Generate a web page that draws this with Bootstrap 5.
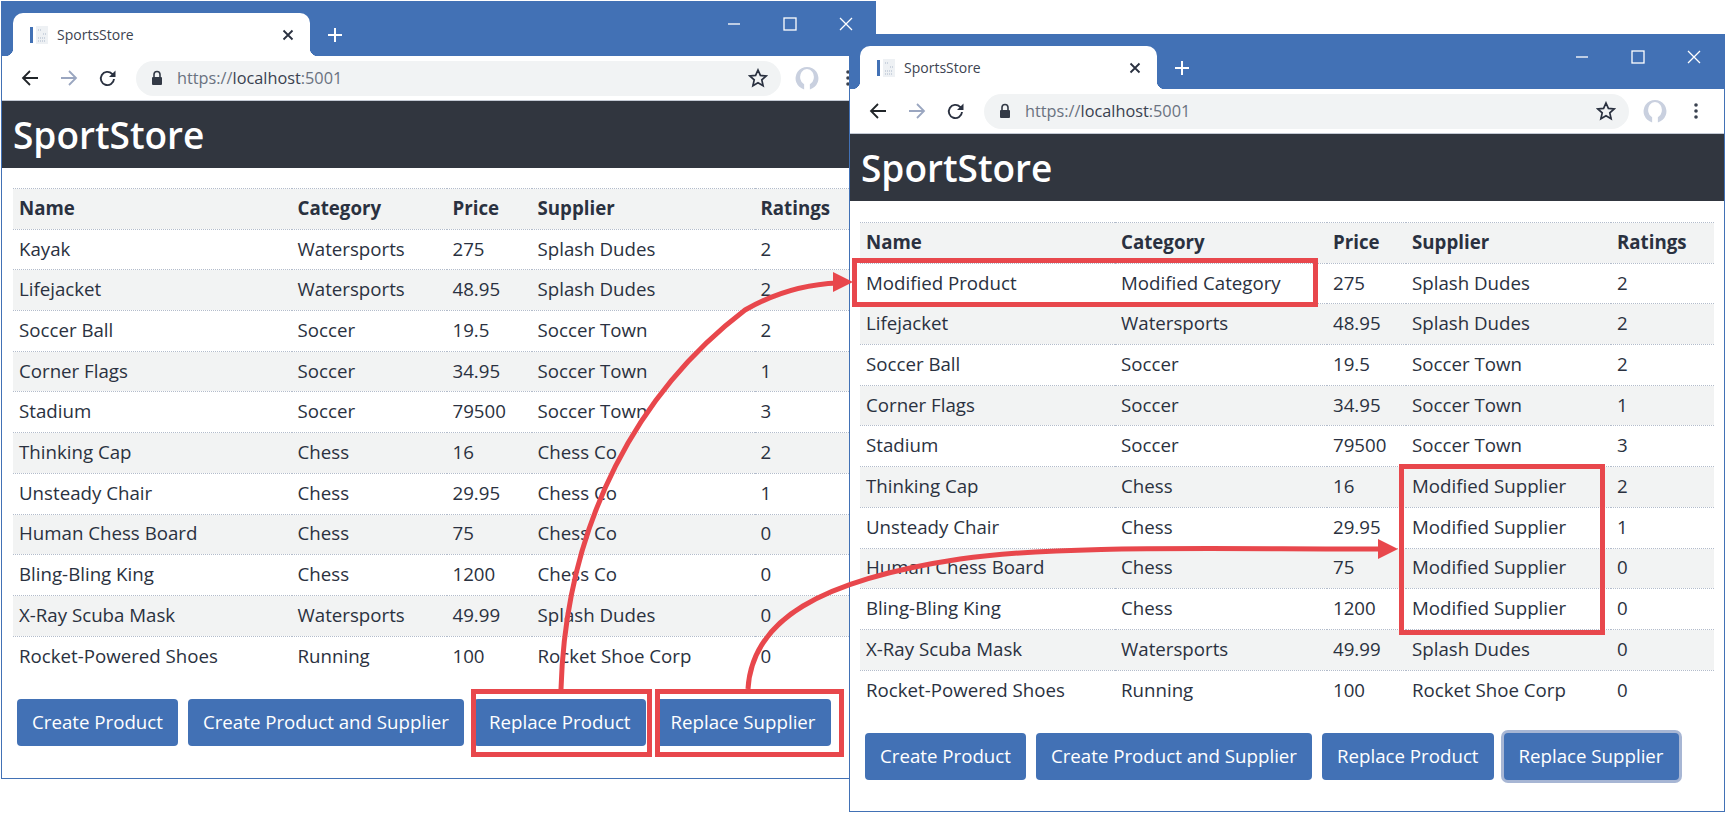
<!DOCTYPE html>
<html lang="en">
<head>
    <meta charset="UTF-8">
    <title>SportsStore</title>
    <link href="https://cdn.jsdelivr.net/npm/bootstrap@5.3.0/dist/css/bootstrap.min.css" rel="stylesheet">
    <style>
        body { background: #fff; overflow: hidden; font-family: "Open Sans", "Liberation Sans", sans-serif; color: #2a3140; }
        .desk { position: relative; width: 1725px; height: 814px; }
        .win { position: absolute; width: 875px; background: #fff; border: 1px solid #4271b5; }
        #winA { left: 1px; top: 1px; height: 778px; }
        #winB { left: 849px; top: 34px; width: 876px; height: 778px; }

        .titlebar { height: 54px; background: #4271b5; padding: 11px 0 0 11px; }
        #winB .titlebar { padding-left: 10px; }
        .tab-page { position: relative; width: 297px; height: 43px; background: #fff; border-radius: 10px 10px 0 0; padding: 0 16px; color: #3c4350; font-size: 14px; }
        .tab-page::before, .tab-page::after { content: ""; position: absolute; bottom: 0; width: 8px; height: 8px; }
        .tab-page::before { left: -8px; background: radial-gradient(circle at 0 0, #4271b5 8px, #fff 8.5px); }
        .tab-page::after { right: -8px; background: radial-gradient(circle at 100% 0, #4271b5 8px, #fff 8.5px); }
        .tab-title { margin-left: 8px; flex-grow: 1; }
        .plus-btn { margin-left: 17px; }
        .win-ctrls { margin-left: auto; gap: 42px; padding: 0 22px 22px 0; }
        #winB .win-ctrls { padding-right: 23px; }

        .toolbar { height: 45px; padding: 0 16px 0 18px; border-bottom: 1px solid #c3c9d4; }
        .nav-icons { gap: 19px; }
        .omnibox { height: 35px; width: 645px; margin-left: 18px; background: #f1f3f4; border-radius: 18px; padding: 0 13px 0 15px; font-size: 16.3px; color: #6a7280; }
        .omnibox b { font-weight: 400; color: #39414f; }
        .url-text { margin-left: 14px; flex-grow: 1; }
        .avatar { margin-left: 14px; }
        .more { margin-left: 27px; }

        .site-head { height: 67px; background: #31363f; color: #fff; padding: 1px 11px 0; font-size: 37px; font-weight: 600; line-height: 66px; }

        .store-table { table-layout: fixed; width: 854px; margin: 20px 0 0 11px; font-size: 18.7px; --bs-table-striped-bg: #f2f3f3; --bs-table-color: #2a3140; --bs-table-striped-color: #2a3140; }
        #winB .store-table { margin: 21px 0 0 10px; }
        .store-table td, .store-table th { height: 40.7px; padding: 0 6px 2px; vertical-align: middle; border-bottom: 0; border-top: 1px dotted #b3bccb; white-space: nowrap; }
        .store-table th { font-weight: 700; }

        #winA .c1 { width: 278.5px; } #winA .c2 { width: 155px; } #winA .c3 { width: 85px; } #winA .c4 { width: 223px; } #winA .c5 { width: 112.5px; }
        #winB .c1 { width: 255px; } #winB .c2 { width: 212px; } #winB .c3 { width: 79px; } #winB .c4 { width: 205px; } #winB .c5 { width: 103px; }

        .btn-row { margin: 22px 0 0 15px; gap: 10px; }
        .btn-store { height: 47px; background: #4271b5; border: 0; border-radius: 4px; color: #fff; font-size: 18.7px; padding: 0 15px; }
        .btn-focus { box-shadow: 0 0 0 3px #a7b6d4; }

        .notes { position: absolute; left: 0; top: 0; pointer-events: none; }
    </style>
</head>
<body>
    <svg width="0" height="0" class="position-absolute">
        <defs>
            <symbol id="i-fav" viewBox="0 0 20 20">
                <rect x="1" y="2" width="3" height="16" fill="#4271b5"/>
                <rect x="7" y="1" width="12" height="18" fill="#eef1f4"/>
                <path d="M9 5h4M14 9h3M9 13h8M9 16h8" stroke="#a9b6c9" stroke-dasharray="1 1" fill="none"/>
            </symbol>
            <symbol id="i-x" viewBox="0 0 12 12"><path d="M1.5 1.5l9 9M10.5 1.5l-9 9" stroke="#2a3140" stroke-width="1.8" fill="none"/></symbol>
            <symbol id="i-plus" viewBox="0 0 16 16"><path d="M8 1v14M1 8h14" stroke="#fff" stroke-width="2" fill="none"/></symbol>
            <symbol id="i-min" viewBox="0 0 14 14"><path d="M1 7h12" stroke="#e8edf5" stroke-width="1.5" fill="none"/></symbol>
            <symbol id="i-max" viewBox="0 0 14 14"><rect x="1" y="1" width="12" height="12" stroke="#fff" stroke-width="1.3" fill="none"/></symbol>
            <symbol id="i-close" viewBox="0 0 14 14"><path d="M1 1l12 12M13 1L1 13" stroke="#fff" stroke-width="1.3" fill="none"/></symbol>
            <symbol id="i-back" viewBox="0 0 20 20"><path d="M18 10H3M10 3l-7 7 7 7" stroke="currentColor" stroke-width="1.8" fill="none"/></symbol>
            <symbol id="i-fwd" viewBox="0 0 20 20"><path d="M2 10h15M10 3l7 7-7 7" stroke="currentColor" stroke-width="1.8" fill="none"/></symbol>
            <symbol id="i-reload" viewBox="0 0 20 20">
                <path d="M16 11a6.600 6.600 0 1 1-1.900-5.200L16 7.600" stroke="#2a3140" stroke-width="1.900" fill="none"/>
                <path d="M17.500 2.500v6.500H11z" fill="#2a3140"/>
            </symbol>
            <symbol id="i-lock" viewBox="0 0 12 16">
                <path d="M3 7V4.500a3 3 0 0 1 6 0V7" stroke="#333a46" stroke-width="1.600" fill="none"/>
                <rect x="1" y="7" width="10" height="8" rx="1" fill="#333a46"/>
            </symbol>
            <symbol id="i-star" viewBox="0 0 20 20"><path d="M10 2l2.400 5.400 5.800.6-4.400 3.900 1.300 5.800L10 14.700l-5.100 3 1.300-5.800L1.800 8l5.800-.6z" stroke="#2a3140" stroke-width="1.700" fill="none"/></symbol>
            <symbol id="i-avatar" viewBox="1.500 1 21 21"><path d="M9.500 21.500A10 10 0 1 1 14.500 21.500V17A6 7 0 1 0 9.500 17Z" fill="#c9d0df"/></symbol>
            <symbol id="i-more" viewBox="0 0 4 18"><circle cx="2" cy="3" r="1.800" fill="#39414f"/><circle cx="2" cy="9" r="1.800" fill="#39414f"/><circle cx="2" cy="15" r="1.800" fill="#39414f"/></symbol>
        </defs>
    </svg>

    <div class="desk">
        <div class="win" id="winA">
            <div class="titlebar d-flex align-items-start">
                <div class="tab-page d-flex align-items-center">
                    <svg width="20" height="20"><use href="#i-fav"/></svg>
                    <span class="tab-title">SportsStore</span>
                    <svg width="12" height="12"><use href="#i-x"/></svg>
                </div>
                <svg class="plus-btn align-self-center" width="16" height="16"><use href="#i-plus"/></svg>
                <div class="win-ctrls d-flex align-items-center align-self-center">
                    <svg width="14" height="14"><use href="#i-min"/></svg>
                    <svg width="14" height="14"><use href="#i-max"/></svg>
                    <svg width="14" height="14"><use href="#i-close"/></svg>
                </div>
            </div>
            <div class="toolbar d-flex align-items-center">
                <div class="nav-icons d-flex">
                    <svg width="20" height="20" class="text-dark"><use href="#i-back"/></svg>
                    <svg width="20" height="20" style="color:#9aa6c0"><use href="#i-fwd"/></svg>
                    <svg width="20" height="20"><use href="#i-reload"/></svg>
                </div>
                <div class="omnibox d-flex align-items-center">
                    <svg width="12" height="16"><use href="#i-lock"/></svg>
                    <span class="url-text">https://<b>localhost</b>:5001</span>
                    <svg width="20" height="20"><use href="#i-star"/></svg>
                </div>
                <svg class="avatar" width="24" height="24"><use href="#i-avatar"/></svg>
                <svg class="more" width="4" height="18"><use href="#i-more"/></svg>
            </div>
            <div class="site-head">SportStore</div>
            <table class="table table-striped store-table mb-0">
                <colgroup><col class="c1"><col class="c2"><col class="c3"><col class="c4"><col class="c5"></colgroup>
                <tbody>
                    <tr><th>Name</th><th>Category</th><th>Price</th><th>Supplier</th><th>Ratings</th></tr>
                    <tr><td>Kayak</td><td>Watersports</td><td>275</td><td>Splash Dudes</td><td>2</td></tr>
                    <tr><td>Lifejacket</td><td>Watersports</td><td>48.95</td><td>Splash Dudes</td><td>2</td></tr>
                    <tr><td>Soccer Ball</td><td>Soccer</td><td>19.5</td><td>Soccer Town</td><td>2</td></tr>
                    <tr><td>Corner Flags</td><td>Soccer</td><td>34.95</td><td>Soccer Town</td><td>1</td></tr>
                    <tr><td>Stadium</td><td>Soccer</td><td>79500</td><td>Soccer Town</td><td>3</td></tr>
                    <tr><td>Thinking Cap</td><td>Chess</td><td>16</td><td>Chess Co</td><td>2</td></tr>
                    <tr><td>Unsteady Chair</td><td>Chess</td><td>29.95</td><td>Chess Co</td><td>1</td></tr>
                    <tr><td>Human Chess Board</td><td>Chess</td><td>75</td><td>Chess Co</td><td>0</td></tr>
                    <tr><td>Bling-Bling King</td><td>Chess</td><td>1200</td><td>Chess Co</td><td>0</td></tr>
                    <tr><td>X-Ray Scuba Mask</td><td>Watersports</td><td>49.99</td><td>Splash Dudes</td><td>0</td></tr>
                    <tr><td>Rocket-Powered Shoes</td><td>Running</td><td>100</td><td>Rocket Shoe Corp</td><td>0</td></tr>
                </tbody>
            </table>
            <div class="btn-row d-flex">
                <button class="btn btn-store">Create Product</button>
                <button class="btn btn-store">Create Product and Supplier</button>
                <button class="btn btn-store">Replace Product</button>
                <button class="btn btn-store">Replace Supplier</button>
            </div>
        </div>

        <div class="win" id="winB">
            <div class="titlebar d-flex align-items-start">
                <div class="tab-page d-flex align-items-center">
                    <svg width="20" height="20"><use href="#i-fav"/></svg>
                    <span class="tab-title">SportsStore</span>
                    <svg width="12" height="12"><use href="#i-x"/></svg>
                </div>
                <svg class="plus-btn align-self-center" width="16" height="16"><use href="#i-plus"/></svg>
                <div class="win-ctrls d-flex align-items-center align-self-center">
                    <svg width="14" height="14"><use href="#i-min"/></svg>
                    <svg width="14" height="14"><use href="#i-max"/></svg>
                    <svg width="14" height="14"><use href="#i-close"/></svg>
                </div>
            </div>
            <div class="toolbar d-flex align-items-center">
                <div class="nav-icons d-flex">
                    <svg width="20" height="20" class="text-dark"><use href="#i-back"/></svg>
                    <svg width="20" height="20" style="color:#9aa6c0"><use href="#i-fwd"/></svg>
                    <svg width="20" height="20"><use href="#i-reload"/></svg>
                </div>
                <div class="omnibox d-flex align-items-center">
                    <svg width="12" height="16"><use href="#i-lock"/></svg>
                    <span class="url-text">https://<b>localhost</b>:5001</span>
                    <svg width="20" height="20"><use href="#i-star"/></svg>
                </div>
                <svg class="avatar" width="24" height="24"><use href="#i-avatar"/></svg>
                <svg class="more" width="4" height="18"><use href="#i-more"/></svg>
            </div>
            <div class="site-head">SportStore</div>
            <table class="table table-striped store-table mb-0">
                <colgroup><col class="c1"><col class="c2"><col class="c3"><col class="c4"><col class="c5"></colgroup>
                <tbody>
                    <tr><th>Name</th><th>Category</th><th>Price</th><th>Supplier</th><th>Ratings</th></tr>
                    <tr><td>Modified Product</td><td>Modified Category</td><td>275</td><td>Splash Dudes</td><td>2</td></tr>
                    <tr><td>Lifejacket</td><td>Watersports</td><td>48.95</td><td>Splash Dudes</td><td>2</td></tr>
                    <tr><td>Soccer Ball</td><td>Soccer</td><td>19.5</td><td>Soccer Town</td><td>2</td></tr>
                    <tr><td>Corner Flags</td><td>Soccer</td><td>34.95</td><td>Soccer Town</td><td>1</td></tr>
                    <tr><td>Stadium</td><td>Soccer</td><td>79500</td><td>Soccer Town</td><td>3</td></tr>
                    <tr><td>Thinking Cap</td><td>Chess</td><td>16</td><td>Modified Supplier</td><td>2</td></tr>
                    <tr><td>Unsteady Chair</td><td>Chess</td><td>29.95</td><td>Modified Supplier</td><td>1</td></tr>
                    <tr><td>Human Chess Board</td><td>Chess</td><td>75</td><td>Modified Supplier</td><td>0</td></tr>
                    <tr><td>Bling-Bling King</td><td>Chess</td><td>1200</td><td>Modified Supplier</td><td>0</td></tr>
                    <tr><td>X-Ray Scuba Mask</td><td>Watersports</td><td>49.99</td><td>Splash Dudes</td><td>0</td></tr>
                    <tr><td>Rocket-Powered Shoes</td><td>Running</td><td>100</td><td>Rocket Shoe Corp</td><td>0</td></tr>
                </tbody>
            </table>
            <div class="btn-row d-flex">
                <button class="btn btn-store">Create Product</button>
                <button class="btn btn-store">Create Product and Supplier</button>
                <button class="btn btn-store">Replace Product</button>
                <button class="btn btn-store btn-focus">Replace Supplier</button>
            </div>
        </div>

        <svg class="notes" width="1725" height="814" fill="none" stroke="#e8474c" stroke-width="5">
            <rect x="473.500" y="691.500" width="176" height="63"/>
            <rect x="657.500" y="691.500" width="184" height="63"/>
            <rect x="854.500" y="260.500" width="461" height="44"/>
            <rect x="1401.500" y="466.500" width="201" height="166"/>
            <path d="M561 689C566 520 640 390 745 310C780 290 810 284 838 283"/>
            <path d="M748 689C752 620 820 580 960 559C1060 545 1200 549 1380 549"/>
            <path d="M833 272L853 282L833 292Z" fill="#e8474c" stroke="none"/>
            <path d="M1378 539L1398 549L1378 559Z" fill="#e8474c" stroke="none"/>
        </svg>
    </div>

    <script src="https://cdn.jsdelivr.net/npm/bootstrap@5.3.0/dist/js/bootstrap.bundle.min.js"></script>
</body>
</html>
